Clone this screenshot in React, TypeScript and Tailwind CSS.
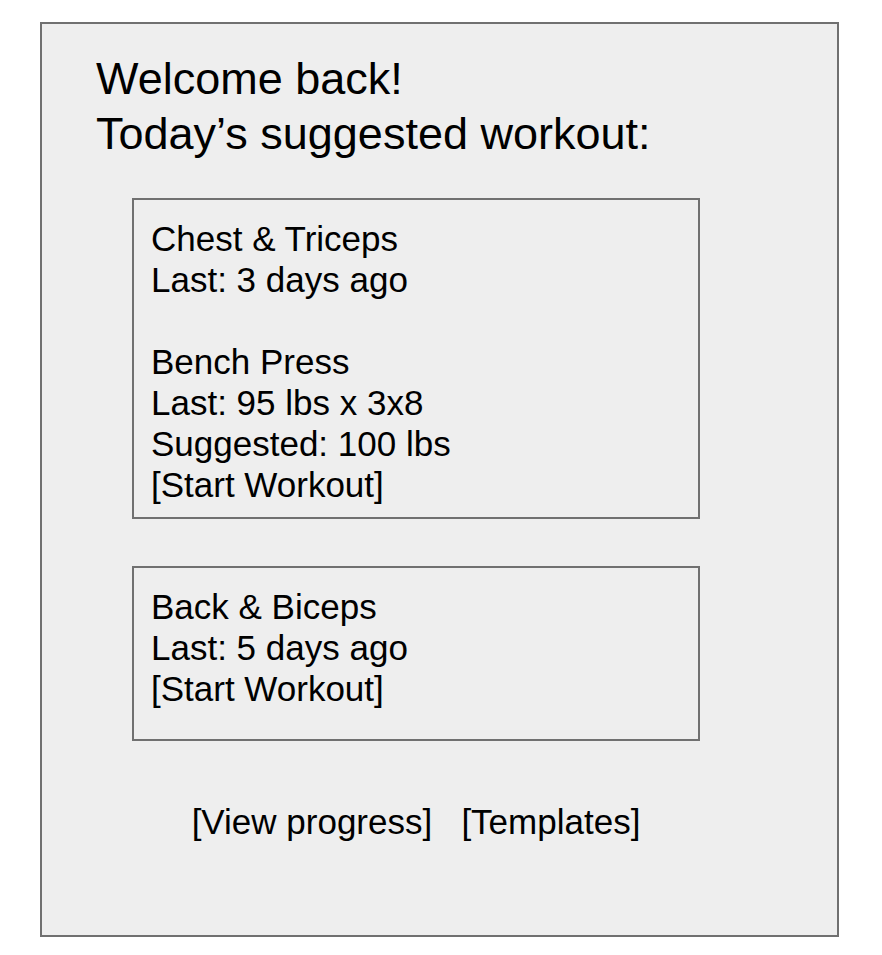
const cardText = "text-[35px] leading-[41px] text-black";

const WorkoutCard = ({ lines, height }: { lines: string[]; height: string }) => {
  return (
    <div className={`${height} w-[568px] border-2 border-[#707070] pl-[17px] pt-[18px] ${cardText}`}>
      {lines.map((line, i) => (
        <div key={i} className="h-[41px] whitespace-pre">
          {line}
        </div>
      ))}
    </div>
  );
};

const App = () => {
  return (
    <div
      className="min-h-[955px] bg-white pt-[22px] pl-[40px]"
      style={{ fontFamily: '"Liberation Sans", Arial, sans-serif' }}
    >
      <div className="h-[915px] w-[799px] border-2 border-[#707070] bg-[#eeeeee] pl-[54px] pt-[27px]">
        <h1 className="text-[45px] leading-[55px] text-black">
          <div>Welcome back!</div>
          <div>Today’s suggested workout:</div>
        </h1>
        <div className="ml-[36px] mt-[37px] flex w-[568px] flex-col">
          <WorkoutCard
            height="h-[321px]"
            lines={[
              "Chest & Triceps",
              "Last: 3 days ago",
              "",
              "Bench Press",
              "Last: 95 lbs x 3x8",
              "Suggested: 100 lbs",
              "[Start Workout]",
            ]}
          />
          <div className="mt-[47px]">
            <WorkoutCard
              height="h-[175px]"
              lines={["Back & Biceps", "Last: 5 days ago", "[Start Workout]"]}
            />
          </div>
          <div className={`mt-[60px] text-center whitespace-pre ${cardText}`}>
            {"[View progress]   [Templates]"}
          </div>
        </div>
      </div>
    </div>
  );
};

export default App;
